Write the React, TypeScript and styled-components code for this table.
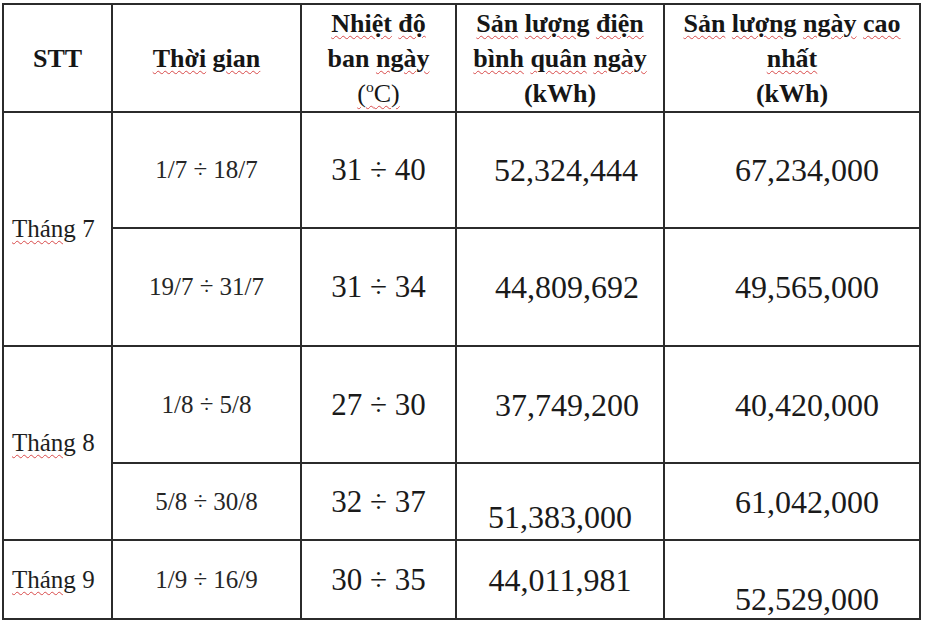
import styled, { createGlobalStyle } from 'styled-components';

const GlobalStyle = createGlobalStyle`
  html, body {
    margin: 0;
    padding: 0;
    background: #ffffff;
  }
  body {
    font-family: "Liberation Serif", "Times New Roman", serif;
    color: #1c1c1c;
  }
`;

const Page = styled.div`
  padding: 3px 0 0 2px;
`;

const Table = styled.table`
  border-collapse: collapse;
  table-layout: fixed;
  width: 919px;
  border: 2px solid #2b2b2b;
`;

const HeadRow = styled.tr`
  height: 108px;
`;

const Row = styled.tr<{ $h: number }>`
  height: ${(p) => p.$h}px;
`;

const HeadCell = styled.th`
  border: 2px solid #2b2b2b;
  padding: 0 4px;
  font-size: 26px;
  line-height: 35px;
  font-weight: 700;
  text-align: center;
  vertical-align: middle;
  color: #161616;
`;

const Unit = styled.span`
  font-weight: 400;
`;

const Deg = styled.sup`
  font-size: 0.6em;
  line-height: 0;
`;

const Spell = styled.span`
  text-decoration: underline wavy #d84a4a;
  text-decoration-thickness: 1px;
  text-underline-offset: 3px;
`;

const MonthCell = styled.td`
  border: 2px solid #2b2b2b;
  padding: 0 0 0 8px;
  font-size: 25px;
  text-align: left;
  vertical-align: middle;
  color: #1e1e1e;
`;

const PeriodCell = styled.td`
  border: 2px solid #2b2b2b;
  font-size: 25px;
  text-align: center;
  vertical-align: middle;
  color: #262626;
`;

const TempCell = styled.td`
  border: 2px solid #2b2b2b;
  font-size: 31px;
  text-align: center;
  vertical-align: middle;
  color: #1a1a1a;
`;

const ValueCell = styled.td<{ $shift?: number; $bottom?: number }>`
  border: 2px solid #2b2b2b;
  font-size: 32px;
  line-height: 34px;
  text-align: center;
  vertical-align: ${(p) => (p.$bottom !== undefined ? 'bottom' : 'middle')};
  padding: 0 0 ${(p) => p.$bottom ?? 0}px ${(p) => p.$shift ?? 0}px;
  color: #1a1a1a;
`;

const rows = [
  { h: 116, period: '1/7 ÷ 18/7', temp: '31 ÷ 40', avg: '52,324,444', avgShift: 12, max: '67,234,000' },
  { h: 118, period: '19/7 ÷ 31/7', temp: '31 ÷ 34', avg: '44,809,692', avgShift: 14, max: '49,565,000' },
  { h: 117, period: '1/8 ÷ 5/8', temp: '27 ÷ 30', avg: '37,749,200', avgShift: 14, max: '40,420,000' },
  { h: 77, period: '5/8 ÷ 30/8', temp: '32 ÷ 37', avg: '51,383,000', avgShift: 0, avgBottom: 5, max: '61,042,000' },
  { h: 79, period: '1/9 ÷ 16/9', temp: '30 ÷ 35', avg: '44,011,981', avgShift: 0, max: '52,529,000', maxBottom: 2 },
];

const months: Record<number, { label: string; span: number }> = {
  0: { label: '7', span: 2 },
  2: { label: '8', span: 2 },
  4: { label: '9', span: 1 },
};

const App = () => {
  return (
    <Page>
      <GlobalStyle />
      <Table>
        <colgroup>
          <col style={{ width: 109 }} />
          <col style={{ width: 189 }} />
          <col style={{ width: 155 }} />
          <col style={{ width: 208 }} />
          <col style={{ width: 256 }} />
        </colgroup>
        <thead>
          <HeadRow>
            <HeadCell>STT</HeadCell>
            <HeadCell>
              <Spell>Thời</Spell> <Spell>gian</Spell>
            </HeadCell>
            <HeadCell>
              <Spell>Nhiệt</Spell> <Spell>độ</Spell>
              <br />
              ban <Spell>ngày</Spell>
              <br />
              <Unit>
                <Spell>
                  (<Deg>o</Deg>C)
                </Spell>
              </Unit>
            </HeadCell>
            <HeadCell>
              <Spell>Sản</Spell> <Spell>lượng</Spell> <Spell>điện</Spell>
              <br />
              <Spell>bình</Spell> <Spell>quân</Spell> <Spell>ngày</Spell>
              <br />
              (kWh)
            </HeadCell>
            <HeadCell>
              <Spell>Sản</Spell> <Spell>lượng</Spell> <Spell>ngày</Spell>{' '}
              <Spell>cao</Spell>
              <br />
              <Spell>nhất</Spell>
              <br />
              (kWh)
            </HeadCell>
          </HeadRow>
        </thead>
        <tbody>
          {rows.map((r, i) => (
            <Row key={r.period} $h={r.h}>
              {months[i] && (
                <MonthCell rowSpan={months[i].span}>
                  <Spell>Tháng</Spell> {months[i].label}
                </MonthCell>
              )}
              <PeriodCell>{r.period}</PeriodCell>
              <TempCell>{r.temp}</TempCell>
              <ValueCell $shift={r.avgShift} $bottom={r.avgBottom}>
                {r.avg}
              </ValueCell>
              <ValueCell $shift={30} $bottom={r.maxBottom}>
                {r.max}
              </ValueCell>
            </Row>
          ))}
        </tbody>
      </Table>
    </Page>
  );
};

export default App;
